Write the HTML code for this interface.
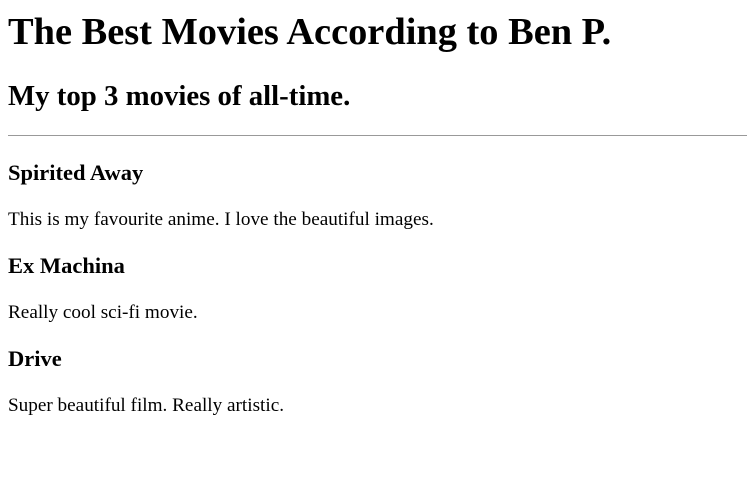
<!DOCTYPE html>
<html><head><style>
html{font-size:19.2px}
body{margin:0 8px;font-family:"Liberation Serif",serif;color:#000;background:#fff;font-size:19.2px}
h1{font-size:38.4px;margin:10px 0 25.7px;line-height:44px}
h2{font-size:28.8px;margin:0 0 22px;line-height:33px}
h3{font-size:22.5px;margin:22.5px 0;line-height:26px}
p{margin:22.5px 0;line-height:22px}
hr{border:0;border-top:1px solid #999;margin:0 -8px 24.5px 0;height:0}
</style></head><body>
<h1>The Best Movies According to Ben P.</h1>
<h2>My top 3 movies of all-time.</h2>
<hr>
<h3>Spirited Away</h3>
<p>This is my favourite anime. I love the beautiful images.</p>
<h3>Ex Machina</h3>
<p>Really cool sci-fi movie.</p>
<h3>Drive</h3>
<p>Super beautiful film. Really artistic.</p>
</body></html>
